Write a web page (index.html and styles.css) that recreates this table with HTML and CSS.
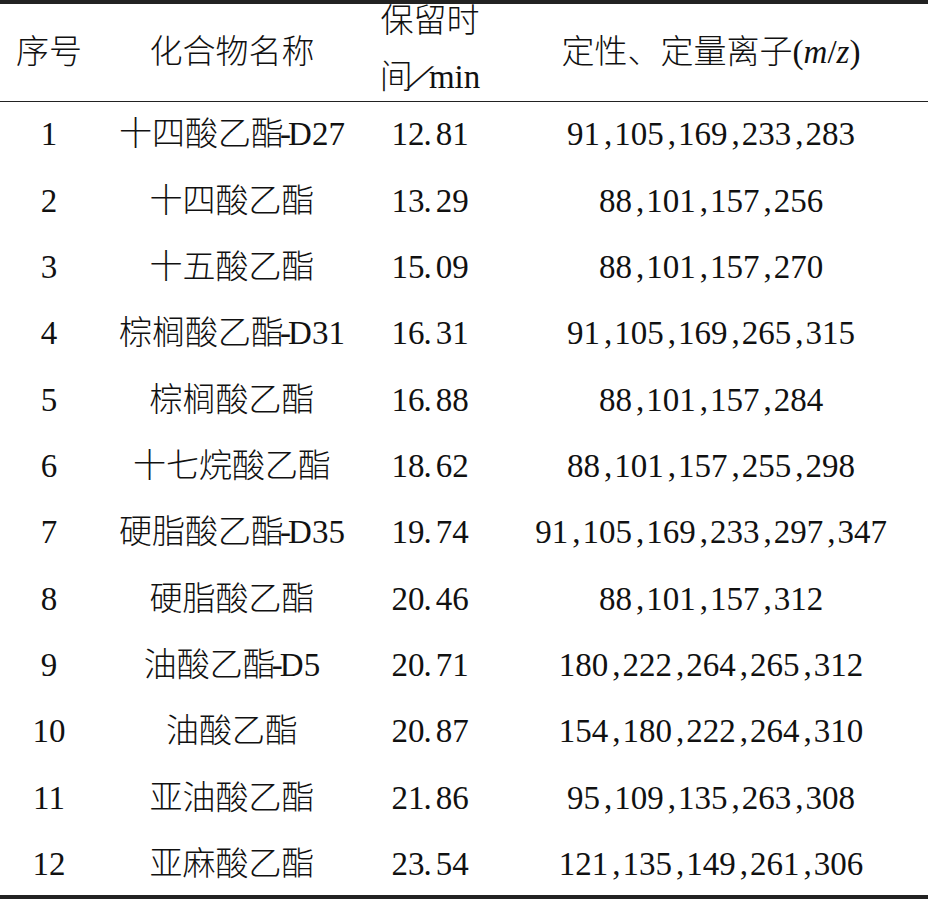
FILE: index.html
```html
<!DOCTYPE html>
<html lang="zh-CN">
<head>
<meta charset="utf-8">
<title>表</title>
<link rel="stylesheet" href="styles.css">
</head>
<body>
<table class="tbl">
  <colgroup>
    <col class="c1"><col class="c2"><col class="c3"><col class="c4">
  </colgroup>
  <thead>
    <tr>
      <th>序号</th>
      <th>化合物名称</th>
      <th><div class="two">保留时<br>间<span class="sl">/</span>min</div></th>
      <th>定性、定量离子(<i>m</i>/<i>z</i>)</th>
    </tr>
  </thead>
  <tbody>
    <tr><td>1</td><td>十四酸乙酯<span class="d">-</span>D27</td><td>12<span class="p">.</span>81</td><td>91<span class="c">,</span>105<span class="c">,</span>169<span class="c">,</span>233<span class="c">,</span>283</td></tr>
    <tr><td>2</td><td>十四酸乙酯</td><td>13<span class="p">.</span>29</td><td>88<span class="c">,</span>101<span class="c">,</span>157<span class="c">,</span>256</td></tr>
    <tr><td>3</td><td>十五酸乙酯</td><td>15<span class="p">.</span>09</td><td>88<span class="c">,</span>101<span class="c">,</span>157<span class="c">,</span>270</td></tr>
    <tr><td>4</td><td>棕榈酸乙酯<span class="d">-</span>D31</td><td>16<span class="p">.</span>31</td><td>91<span class="c">,</span>105<span class="c">,</span>169<span class="c">,</span>265<span class="c">,</span>315</td></tr>
    <tr><td>5</td><td>棕榈酸乙酯</td><td>16<span class="p">.</span>88</td><td>88<span class="c">,</span>101<span class="c">,</span>157<span class="c">,</span>284</td></tr>
    <tr><td>6</td><td>十七烷酸乙酯</td><td>18<span class="p">.</span>62</td><td>88<span class="c">,</span>101<span class="c">,</span>157<span class="c">,</span>255<span class="c">,</span>298</td></tr>
    <tr><td>7</td><td>硬脂酸乙酯<span class="d">-</span>D35</td><td>19<span class="p">.</span>74</td><td>91<span class="c">,</span>105<span class="c">,</span>169<span class="c">,</span>233<span class="c">,</span>297<span class="c">,</span>347</td></tr>
    <tr><td>8</td><td>硬脂酸乙酯</td><td>20<span class="p">.</span>46</td><td>88<span class="c">,</span>101<span class="c">,</span>157<span class="c">,</span>312</td></tr>
    <tr><td>9</td><td>油酸乙酯<span class="d">-</span>D5</td><td>20<span class="p">.</span>71</td><td>180<span class="c">,</span>222<span class="c">,</span>264<span class="c">,</span>265<span class="c">,</span>312</td></tr>
    <tr><td>10</td><td>油酸乙酯</td><td>20<span class="p">.</span>87</td><td>154<span class="c">,</span>180<span class="c">,</span>222<span class="c">,</span>264<span class="c">,</span>310</td></tr>
    <tr><td>11</td><td>亚油酸乙酯</td><td>21<span class="p">.</span>86</td><td>95<span class="c">,</span>109<span class="c">,</span>135<span class="c">,</span>263<span class="c">,</span>308</td></tr>
    <tr><td>12</td><td>亚麻酸乙酯</td><td>23<span class="p">.</span>54</td><td>121<span class="c">,</span>135<span class="c">,</span>149<span class="c">,</span>261<span class="c">,</span>306</td></tr>
  </tbody>
</table>
</body>
</html>
```

FILE: styles.css
```css
html, body {
  margin: 0;
  padding: 0;
  background: #ffffff;
}

body {
  font-family: "Liberation Serif", "Noto Sans CJK SC", serif;
  font-size: 33px;
  line-height: 40px;
  color: #111111;
}

.tbl {
  width: 928px;
  border-collapse: separate;
  border-spacing: 0;
  table-layout: fixed;
  border-top: 4px solid #222222;
  border-bottom: 4px solid #222222;
}

.c1 { width: 98px; }
.c2 { width: 268px; }
.c3 { width: 128px; }
.c4 { width: 434px; }

.tbl th,
.tbl td {
  padding: 0;
  text-align: center;
  vertical-align: middle;
  font-weight: 300;
  white-space: nowrap;
  line-height: 40px;
}

.tbl thead tr {
  height: 98px;
}

.tbl th {
  padding-bottom: 2px;
  border-bottom: 1px solid #222222;
}

.two {
  line-height: 56px;
  margin: -16px 0 -10px;
}

.sl {
  display: inline-block;
  margin: 0 4px 0 3px;
  transform: scaleX(1.6) skewX(-20deg);
}

.tbl tbody tr {
  height: 66.36px;
}

.tbl td {
  padding-bottom: 2px;
}

.tbl tbody tr:last-child {
  height: 63px;
}

.tbl tbody tr:last-child td {
  padding-top: 2px;
  padding-bottom: 0;
}

.c {
  margin: 0 2px 0 4px;
}

.d {
  margin: 0 -3px 0 -4px;
}

.p {
  margin: 0 4px 0 -1px;
}

i {
  font-style: italic;
}
```
